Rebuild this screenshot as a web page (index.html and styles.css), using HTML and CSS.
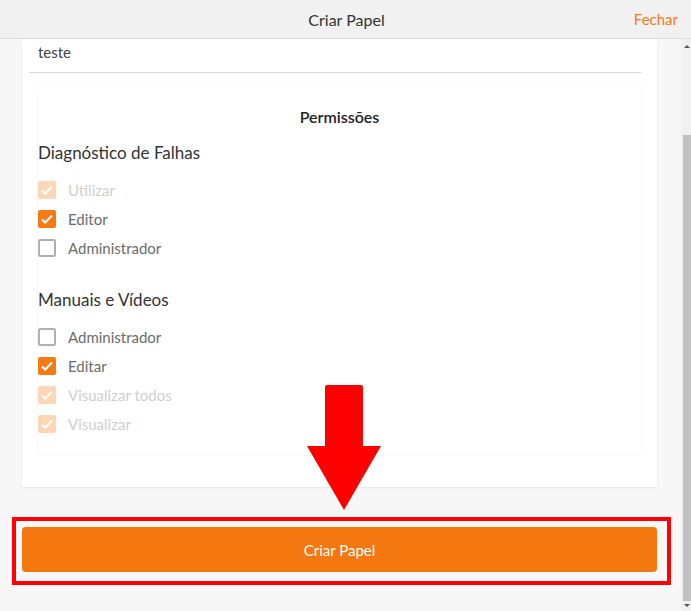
FILE: index.html
```html
<!DOCTYPE html>
<html lang="pt">
<head>
  <meta charset="UTF-8" />
  <meta name="viewport" content="width=device-width, initial-scale=1.0" />
  <title>Criar Papel</title>
  <link rel="stylesheet" href="styles.css">
</head>
<body>
  <header class="topbar">
    <span></span>
    <span class="title">Criar Papel</span>
    <a class="close">Fechar</a>
  </header>

  <div class="main">
    <div class="content">
      <div class="card">
        <div class="field">teste</div>

        <div class="perms">
          <div class="perms-title">Permissões</div>

          <div class="group-title">Diagnóstico de Falhas</div>
          <div class="opt disabled"><span class="box checked"><svg viewBox="0 0 18 18"><path d="M4 9.5l3.2 3L14 5.5"/></svg></span>Utilizar</div>
          <div class="opt"><span class="box checked"><svg viewBox="0 0 18 18"><path d="M4 9.5l3.2 3L14 5.5"/></svg></span>Editor</div>
          <div class="opt"><span class="box"></span>Administrador</div>

          <div class="group-title second">Manuais e Vídeos</div>
          <div class="opt"><span class="box"></span>Administrador</div>
          <div class="opt"><span class="box checked"><svg viewBox="0 0 18 18"><path d="M4 9.5l3.2 3L14 5.5"/></svg></span>Editar</div>
          <div class="opt disabled"><span class="box checked"><svg viewBox="0 0 18 18"><path d="M4 9.5l3.2 3L14 5.5"/></svg></span>Visualizar todos</div>
          <div class="opt disabled"><span class="box checked"><svg viewBox="0 0 18 18"><path d="M4 9.5l3.2 3L14 5.5"/></svg></span>Visualizar</div>
        </div>
      </div>

      <div class="highlight">
        <button class="submit">Criar Papel</button>
      </div>
    </div>

    <div class="scrollbar">
      <span class="arrow up"></span>
      <span class="thumb"></span>
      <span class="arrow down"></span>
    </div>
  </div>

  <svg class="pointer" width="76" height="128" viewBox="0 0 76 128">
    <path d="M19 3 Q19 1 21 1 L55 1 Q57 1 57 3 L57 62 L75 62 L38 126 L1 62 L19 62 Z" fill="#ff0000"/>
  </svg>
</body>
</html>
```

FILE: styles.css
```css
html, body {
  margin: 0;
  padding: 0;
  height: 100%;
  overflow: hidden;
  background: #f7f7f7;
  font-family: Lato, "Open Sans", sans-serif;
  color: #333;
}
.topbar {
  display: grid;
  grid-template-columns: 1fr auto 1fr;
  align-items: center;
  height: 38px;
  background: #f1f1f1;
  border-bottom: 1px solid #dcdcdc;
}
.topbar .title {
  font-size: 16px;
  color: #333;
  padding-left: 2px;
}
.topbar .close {
  justify-self: end;
  padding-right: 13px;
  font-size: 15px;
  color: #f47a14;
}
.main {
  display: flex;
  height: 572px;
}
.content {
  flex: 1;
  padding: 0 24px 0 22px;
}
.card {
  background: #fff;
  padding: 0 16px 32px;
  box-shadow: 0 1px 2px rgba(0, 0, 0, 0.08);
}
.field {
  margin-left: -9px;
  padding: 4px 0 11px 9px;
  font-size: 15px;
  color: #444;
  border-bottom: 1px solid #d6d6d6;
}
.perms {
  margin-top: 10px;
  padding: 24px 0 17px;
  border-radius: 8px;
  box-shadow: 0 0 2px rgba(0, 0, 0, 0.1);
}
.perms-title {
  text-align: center;
  font-size: 16px;
  font-weight: 600;
  color: #222;
  margin-bottom: 16px;
}
.group-title {
  font-size: 17px;
  color: #333;
  margin-bottom: 12px;
}
.group-title.second {
  margin-top: 27px;
}
.opt {
  display: flex;
  align-items: center;
  height: 29px;
  font-size: 15px;
  color: #6b6b6b;
}
.opt.disabled {
  color: #cfcfcf;
}
.box {
  box-sizing: border-box;
  width: 18px;
  height: 18px;
  margin-right: 12px;
  border: 2px solid #b0b0b0;
  border-radius: 2px;
  display: flex;
}
.box.checked {
  border: none;
  background: #f47a14;
}
.opt.disabled .box.checked {
  background: #fdd6b5;
}
.box svg {
  width: 18px;
  height: 18px;
  fill: none;
  stroke: #fff;
  stroke-width: 2;
}
.highlight {
  margin: 30px -14px 0 -10px;
  padding: 6px 10px 9px 6px;
  border: 4px solid #ff0000;
}
.submit {
  display: block;
  width: 100%;
  height: 45px;
  border: none;
  border-radius: 4px;
  background: #f47710;
  color: #fff;
  font-family: inherit;
  font-size: 15px;
}
.scrollbar {
  width: 10px;
  background: #f0f0f0;
  display: flex;
  flex-direction: column;
  align-items: flex-end;
}
.scrollbar .thumb {
  width: 8px;
  margin: 87px 0 3px;
  flex: 1;
  background: #c1c1c1;
}
.arrow {
  width: 0;
  height: 0;
  margin-right: 1px;
  border-left: 3px solid transparent;
  border-right: 3px solid transparent;
}
.arrow.up {
  margin-top: 6px;
  border-bottom: 3px solid #555;
}
.arrow.down {
  margin-bottom: 4px;
  border-top: 3px solid #555;
}
.pointer {
  position: absolute;
  left: 306px;
  top: 384px;
}
```
